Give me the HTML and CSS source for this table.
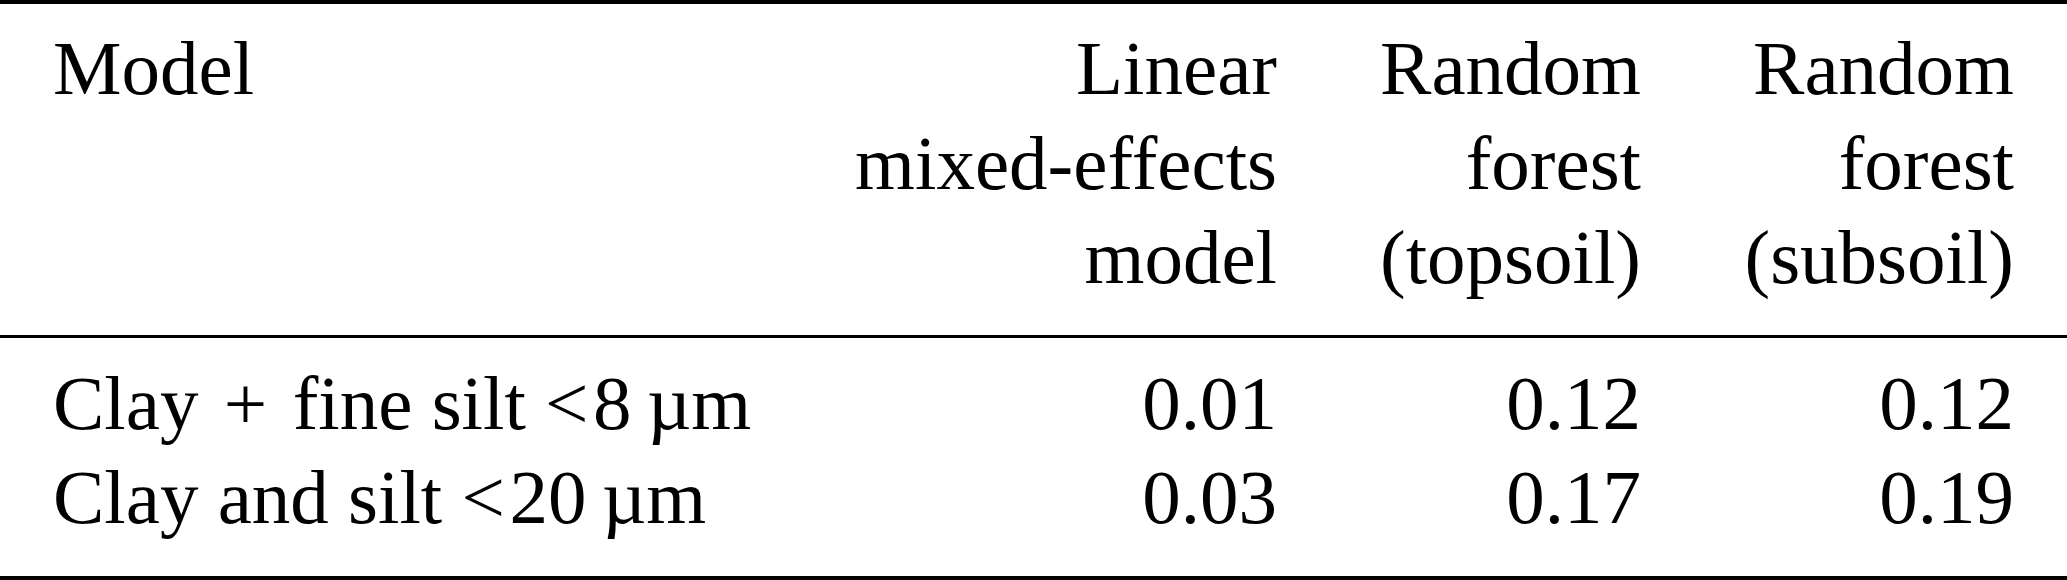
FILE: index.html
```html
<!DOCTYPE html>
<html lang="en">
<head>
    <meta charset="UTF-8">
    <meta name="viewport" content="width=device-width, initial-scale=1.0">
    <title>Model comparison</title>
    <link rel="stylesheet" href="styles.css">
</head>
<body>
    <table class="results">
        <colgroup>
            <col class="col-name">
            <col class="col-lme">
            <col class="col-top">
            <col class="col-sub">
        </colgroup>
        <thead>
            <tr>
                <th class="name">Model</th>
                <th>Linear<br>mixed-effects<br>model</th>
                <th>Random<br>forest<br>(topsoil)</th>
                <th>Random<br>forest<br>(subsoil)</th>
            </tr>
        </thead>
        <tbody>
            <tr>
                <td class="name">Clay <span class="op">+</span> fine silt <span class="rel">&lt;</span>8&#8201;µm</td>
                <td>0.01</td>
                <td>0.12</td>
                <td>0.12</td>
            </tr>
            <tr>
                <td class="name">Clay and silt <span class="rel">&lt;</span>20&#8201;µm</td>
                <td>0.03</td>
                <td>0.17</td>
                <td>0.19</td>
            </tr>
        </tbody>
    </table>
</body>
</html>
```

FILE: styles.css
```css
html, body {
    margin: 0;
    padding: 0;
    background-color: #fff;
}
.results {
    width: 2067px;
    table-layout: fixed;
    border-collapse: separate;
    border-spacing: 0;
    font-family: "Liberation Serif", "Times New Roman", serif;
    font-size: 77px;
    line-height: 94.5px;
    color: #000;
}
.col-name {
    width: 777px;
}
.col-lme {
    width: 500px;
}
.col-top {
    width: 364px;
}
.col-sub {
    width: 426px;
}
.results th,
.results td {
    padding: 0;
    text-align: right;
    vertical-align: top;
    font-weight: normal;
    white-space: nowrap;
}
.results th:last-child,
.results td:last-child {
    padding-right: 53px;
}
.results .name {
    text-align: left;
    padding-left: 53px;
}
.results thead th {
    border-top: 4px solid #000;
    border-bottom: 3px solid #000;
    padding-top: 17px;
    padding-bottom: 30.5px;
}
.results tbody tr:first-child td {
    padding-top: 17.5px;
}
.results tbody tr:last-child td {
    padding-bottom: 31.5px;
    border-bottom: 4px solid #000;
}
.op {
    padding: 0 0.08em;
}
.rel {
    padding-right: 0.06em;
}
```
